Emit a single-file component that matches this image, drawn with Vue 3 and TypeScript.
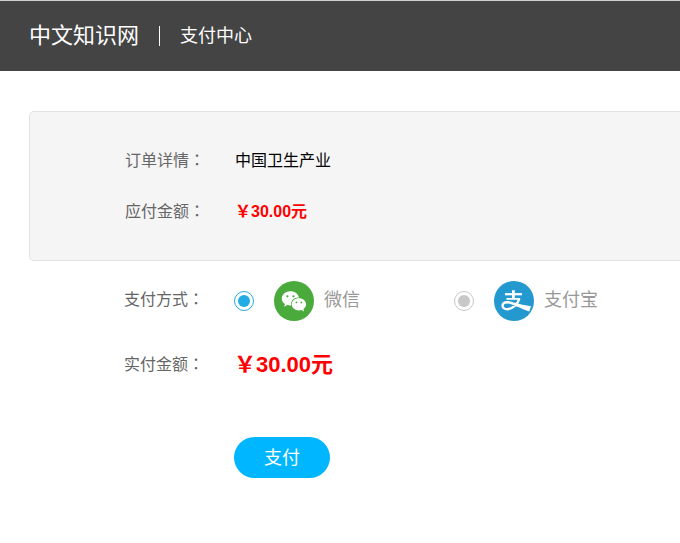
<script setup lang="ts">
import { ref } from 'vue'

type Method = 'wechat' | 'alipay'

const methods: { id: Method; name: string }[] = [
  { id: 'wechat', name: '微信' },
  { id: 'alipay', name: '支付宝' },
]
const selected = ref<Method>('wechat')

// Full-width yen sign, so the symbol takes one CJK cell.
const amount = '\uFFE530.00元'
</script>

<template>
  <header class="header">
    <h1 class="site">中文知识网</h1>
    <span class="section">支付中心</span>
  </header>

  <main class="main">
    <dl class="order">
      <div class="row">
        <dt class="label">订单详情<span class="colon">&#xFF1A;</span></dt>
        <dd class="value">中国卫生产业</dd>
      </div>
      <div class="row">
        <dt class="label">应付金额<span class="colon">&#xFF1A;</span></dt>
        <dd class="value price">{{ amount }}</dd>
      </div>
    </dl>

    <form class="payment" @submit.prevent>
      <div class="row methods" role="radiogroup" aria-labelledby="method-label">
        <span id="method-label" class="label">支付方式<span class="colon">&#xFF1A;</span></span>
        <div class="options">
          <label v-for="m in methods" :key="m.id" class="option">
            <input v-model="selected" class="radio" type="radio" name="method" :value="m.id" />
            <svg v-if="m.id === 'wechat'" class="logo" viewBox="0 0 40 40" aria-hidden="true">
              <circle cx="20" cy="20" r="20" fill="#4aaa3c" />
              <path
                fill="#fff"
                d="M16.400 10.200c-4.800 0-8.600 3.200-8.600 7.200 0 2.300 1.200 4.300 3.200 5.700l-.9 2.700 3.200-1.700c1 .3 2 .4 3.100.4h.8a6.300 6.300 0 0 1-.2-1.600c0-3.700 3.300-6.500 7.500-6.500h.5c-.7-3.600-4.300-6.200-8.600-6.200z"
              />
              <path
                fill="#fff"
                d="M24.900 17.200c-4.100 0-7.200 2.700-7.200 6.100s3.100 6.100 7.200 6.100c.9 0 1.800-.2 2.600-.4l2.600 1.400-.7-2.300c1.700-1.200 2.700-2.900 2.700-4.800 0-3.400-3.200-6.100-7.200-6.100z"
              />
              <g fill="#4aaa3c">
                <circle cx="13.400" cy="15.300" r="1.100" />
                <circle cx="19.400" cy="15.300" r="1.100" />
                <circle cx="22.500" cy="21.400" r="0.900" />
                <circle cx="27.300" cy="21.400" r="0.900" />
              </g>
            </svg>
            <svg v-else class="logo" viewBox="0 0 40 40" aria-hidden="true">
              <circle cx="20" cy="20" r="20" fill="#2499d0" />
              <g fill="none" stroke="#fff">
                <path stroke-width="2.200" d="M11 13.200H28" />
                <path stroke-width="2.800" d="M19.400 9.200V18" />
                <path stroke-width="1.800" d="M12.500 17.900H26" />
                <path
                  stroke-width="2.400"
                  d="M25.400 17.500C24 22.500 19 28.200 13.300 28.200C10.200 28.200 8.600 26.600 8.600 24.700C8.600 22.600 10.400 21.200 13.300 21.200C17 21.200 20 23 24 24.800"
                />
              </g>
              <path fill="#fff" d="M20.500 21.400C26 23.200 31 24.300 37 25.200L35.200 30.400C31 29 25.500 26.600 20.500 24.200Z" />
            </svg>
            <span class="name">{{ m.name }}</span>
          </label>
        </div>
      </div>

      <div class="row">
        <span class="label">实付金额<span class="colon">&#xFF1A;</span></span>
        <strong class="total-price">{{ amount }}</strong>
      </div>

      <button class="pay" type="submit">支付</button>
    </form>
  </main>
</template>

<style>
body {
  background: #fff;
  overflow-x: hidden;
}
</style>

<style scoped>
.header,
.main,
.pay {
  font-family: "Liberation Sans", "Noto Sans CJK SC", sans-serif;
}

.header {
  display: flex;
  align-items: center;
  height: 70px;
  padding-left: 29px;
  border-top: 1px solid #ccd0cf;
  background: #444;
  color: #fff;
}

.site {
  margin: 0;
  font-size: 22px;
  font-weight: 400;
  line-height: 32px;
}

.section {
  margin-left: 20px;
  padding-left: 20px;
  border-left: 1px solid #fff;
  font-size: 18px;
  line-height: 20px;
}

.main {
  padding: 40px 0 64px 29px;
  font-size: 16px;
}

.order {
  margin: 0;
  padding: 23px 0 23px 95px;
  border: 1px solid #e2e2e2;
  border-right: 0;
  border-radius: 5px 0 0 5px;
  background: #f5f5f5;
}

.row {
  display: grid;
  grid-template-columns: 110px 1fr;
  align-items: center;
  min-height: 51px;
  line-height: 24px;
}

.label {
  color: #666;
}

.colon {
  font-family: "Noto Sans CJK TC", sans-serif;
  line-height: 1;
}

.value {
  margin: 0;
  color: #000;
}

.value.price {
  color: #f00;
  font-weight: 700;
}

.payment {
  padding: 20px 0 0 95px;
}

.methods {
  min-height: 40px;
  margin-bottom: 18px;
}

.methods .label,
.name {
  padding-bottom: 2px;
}

.options {
  display: grid;
  grid-template-columns: 220px 1fr;
}

.option {
  display: flex;
  align-items: center;
  white-space: nowrap;
  cursor: pointer;
}

.radio {
  appearance: none;
  flex: none;
  width: 20px;
  height: 20px;
  margin: 0 20px 0 0;
  padding: 3px;
  border: 1px solid #c8c8c8;
  border-radius: 50%;
  background: #c8c8c8 content-box;
  cursor: pointer;
}

.radio:checked {
  border-color: #22ace4;
  background-color: #22ace4;
}

.logo {
  flex: none;
  width: 40px;
  height: 40px;
  margin-right: 10px;
}

.name {
  color: #999;
  font-size: 18px;
}

.total-price {
  color: #f00;
  font-size: 22px;
}

.pay {
  display: block;
  width: 96px;
  height: 41px;
  margin: 47px 0 0 110px;
  padding: 0 0 3px;
  border: 0;
  border-radius: 21px;
  background: #00b7ff;
  color: #fff;
  font-size: 18px;
  cursor: pointer;
}
</style>
